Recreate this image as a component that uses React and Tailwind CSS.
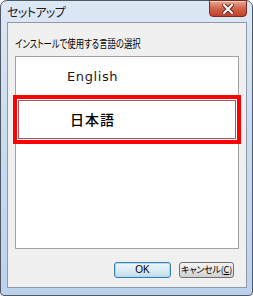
export default function App() {
  const jp = "font-['Noto_Sans_CJK_JP',sans-serif] [font-feature-settings:'palt']";

  return (
    <div className="w-[253px] h-[296px] overflow-hidden bg-white">
      <div className="w-[253px] h-[296px] flex flex-col rounded-t-[7px] rounded-b-[4px] border border-[#4f5a66] bg-gradient-to-b from-[#dde8f5] via-[#c9dbef] to-[#bcd2ec]">
        {/* title bar */}
        <div className="h-[21px] flex items-start justify-between">
          <span className={`${jp} pl-[6px] pt-[3px] text-[12px] leading-[15px] tracking-[-0.6px] text-[#1b1b1b]`}>セットアップ</span>
          <div className="-mt-px mr-[5px] w-[38px] h-[17px] flex items-center justify-center rounded-b-[4px] border border-[#7a2a1c] bg-gradient-to-b from-[#e9a896] via-[#d0634c] to-[#c2402a] shadow-[inset_0_1px_0_rgba(255,255,255,0.5)]">
            <svg width="12" height="10" viewBox="0 0 12 10">
              <path d="M2 1 L10 9 M10 1 L2 9" stroke="#5a1e14" strokeWidth="4" strokeLinecap="square" />
              <path d="M2 1 L10 9 M10 1 L2 9" stroke="#f4f4f4" strokeWidth="2.2" strokeLinecap="square" />
            </svg>
          </div>
        </div>

        {/* client area */}
        <div className="ml-[6px] mr-[5px] h-[266px] flex flex-col border border-[#8e9aa8] bg-[#f0f0f0]">
          <div className="pl-[7px] pt-[7px] h-[33px]">
            <span className={`${jp} inline-block origin-left scale-x-[0.76] whitespace-nowrap text-[11px] leading-[16px] text-black`}>
              インストールで使用する言語の選択
            </span>
          </div>

          <div className="relative mx-[7px] h-[193px] border border-[#a2a2a2] bg-white">
            <div className="h-[40px] flex items-center pl-[51px] font-['DejaVu_Sans',sans-serif] text-[13px] tracking-[0.6px] text-[#1a1a1a]">
              English
            </div>
            <div className="relative h-[44px] flex items-center pl-[54px]">
              <div className="absolute left-[2px] right-[2px] top-[3px] bottom-[2px] border border-[#a85565]" />
              <span className={`${jp} text-[14px] font-medium tracking-[1px] text-black`}>日本語</span>
            </div>
            {/* annotation frame */}
            <div className="absolute left-[-3px] top-[38px] w-[228px] h-[49px] border-4 border-[#ff0000]" />
          </div>

          <div className="flex justify-end gap-[8px] pr-[12px] pt-[13px]">
            <button className="w-[57px] h-[16px] rounded-[3px] border border-[#3c7fb1] bg-gradient-to-b from-[#eef6fb] via-[#dcebf5] to-[#c4dceb] shadow-[inset_0_0_0_1px_#a8dcf5] font-['Liberation_Sans',sans-serif] text-[10px] leading-[14px] text-black">
              OK
            </button>
            <button className={`${jp} w-[55px] h-[16px] px-0 whitespace-nowrap rounded-[3px] border border-[#707070] bg-gradient-to-b from-[#f2f2f2] via-[#e6e6e6] to-[#d0d0d0] text-[9px] leading-[14px] tracking-[-0.2px] text-black`}>
              キャンセル(<span className="underline">C</span>)
            </button>
          </div>
        </div>
      </div>
    </div>
  );
}
